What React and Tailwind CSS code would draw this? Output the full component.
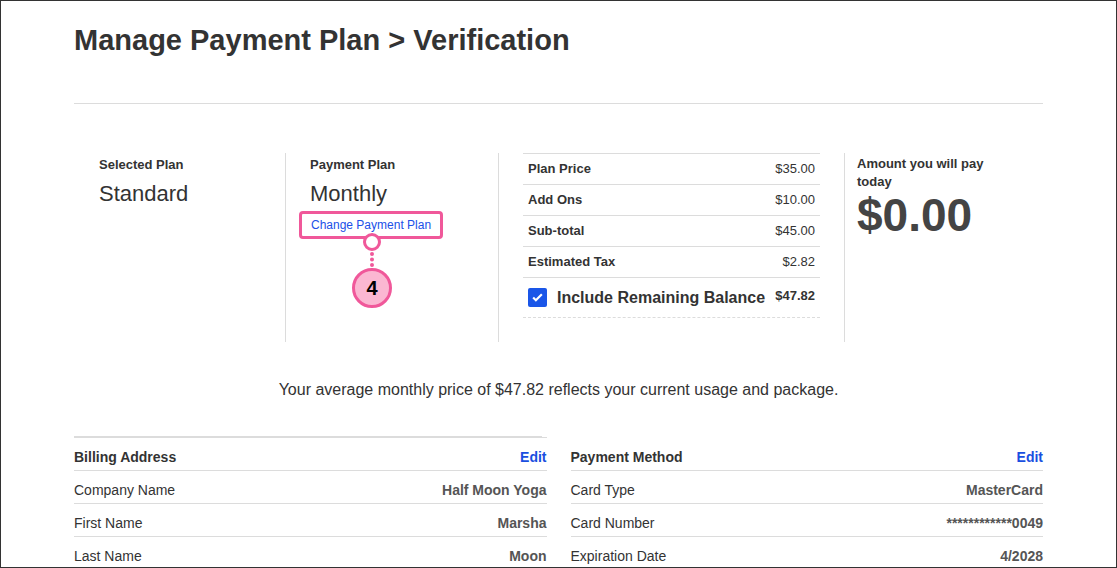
export default function App() {
  const table = [
    ['Plan Price', '$35.00'],
    ['Add Ons', '$10.00'],
    ['Sub-total', '$45.00'],
    ['Estimated Tax', '$2.82'],
  ]
  const billing = [['Company Name', 'Half Moon Yoga'], ['First Name', 'Marsha'], ['Last Name', 'Moon']]
  const payment = [['Card Type', 'MasterCard'], ['Card Number', '************0049'], ['Expiration Date', '4/2028']]

  const Section = ({ title, rows }) => (
    <div className="flex-1">
      <div className="flex justify-between items-center h-[33px] border-b border-[#dcdcdc] pt-[12px] pb-[6px] text-[14px] font-bold">
        <span className="text-[#333]">{title}</span>
        <span className="text-[#1a4fe0]">Edit</span>
      </div>
      {rows.map(([k, v]) => (
        <div key={k} className="flex justify-between items-center h-[33px] border-b border-[#dcdcdc] pt-[12px] pb-[6px] text-[14px]">
          <span className="text-[#333]">{k}</span>
          <span className="font-bold text-[#555]">{v}</span>
        </div>
      ))}
    </div>
  )

  return (
    <div className="w-[1117px] h-[568px] bg-white border border-[#333] overflow-hidden text-[#333]" style={{ fontFamily: '"Liberation Sans", Arial, sans-serif' }}>
      <div className="mx-[73px]">
        <h1 className="text-[29px] font-bold pt-[18px] h-[103px] border-b border-[#dcdcdc] text-[#333]">Manage Payment Plan &gt; Verification</h1>
        <div className="flex mt-[49px] h-[189px]">
          <div className="w-[212px] pl-[25px] pt-[2px] border-r border-[#dcdcdc]">
            <div className="text-[13px] font-bold">Selected Plan</div>
            <div className="text-[22px] mt-[2px]">Standard</div>
          </div>
          <div className="w-[213px] pl-[24px] pt-[2px] border-r border-[#dcdcdc]">
            <div className="text-[13px] font-bold">Payment Plan</div>
            <div className="text-[22px] mt-[2px]">Monthly</div>
            <div className="relative inline-block -ml-[11px] mt-[1px]">
              <div className="border-[3px] border-[#f0589a] rounded-[4px] px-[9px] py-[2px] text-[12px] text-[#2050e8] bg-white">Change Payment Plan</div>
              <div className="absolute left-[64px] top-[22px] w-[18px] h-[18px] rounded-full border-[3px] border-[#f0589a] bg-white" />
              <div className="absolute left-[71px] top-[41px] w-[4px] h-[15px] border-l-4 border-dotted border-[#f0589a]" />
              <div className="absolute left-[53px] top-[57px] w-[40px] h-[40px] rounded-full border-[3px] border-[#f0589a] bg-[#fbb7d2] flex items-center justify-center text-[20px] font-bold text-black">4</div>
            </div>
          </div>
          <div className="w-[346px] px-[24px] border-r border-[#dcdcdc]">
            <div className="border-t border-[#dcdcdc]">
              {table.map(([k, v]) => (
                <div key={k} className="flex justify-between items-center h-[31px] border-b border-[#dcdcdc] px-[5px] text-[13px]">
                  <span className="font-bold">{k}</span><span>{v}</span>
                </div>
              ))}
              <div className="flex justify-between items-center h-[40px] border-b border-dashed border-[#dcdcdc] px-[5px]">
                <span className="flex items-center gap-[10px]">
                  <span className="w-[19px] h-[19px] bg-[#1a56e8] rounded-[2px] flex items-center justify-center">
                    <svg width="13" height="13" viewBox="0 0 24 24" fill="none" stroke="white" strokeWidth="4"><path d="M4 12l5 5L20 6" /></svg>
                  </span>
                  <span className="text-[16px] font-bold">Include Remaining Balance</span>
                </span>
                <span className="text-[13px] font-bold -mt-[4px]">$47.82</span>
              </div>
            </div>
          </div>
          <div className="pl-[12px] pt-[2px]">
            <div className="text-[13px] font-bold leading-[18px] w-[150px]">Amount you will pay today</div>
            <div className="text-[46px] font-bold text-[#444] leading-[48px]">$0.00</div>
          </div>
        </div>
        <div className="text-center text-[16px] h-[95px] pt-[36px] border-b border-[#dcdcdc] w-[468px]" />
        <div className="text-center text-[16px] -mt-[59px] mb-[32px] h-[27px]">Your average monthly price of $47.82 reflects your current usage and package.</div>
        <div className="flex gap-[24px]">
          <div className="flex-1 border-t border-[#dcdcdc]"><Section title="Billing Address" rows={billing} /></div>
          <div className="flex-1"><div className="h-px" /><Section title="Payment Method" rows={payment} /></div>
        </div>
      </div>
    </div>
  )
}
